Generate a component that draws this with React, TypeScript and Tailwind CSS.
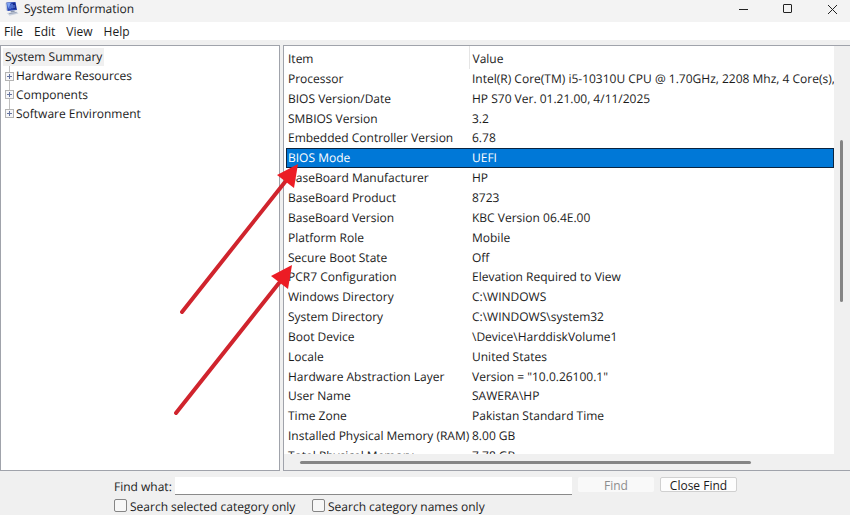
import React from "react";

const rows: [string, string][] = [
  ["Processor", "Intel(R) Core(TM) i5-10310U CPU @ 1.70GHz, 2208 Mhz, 4 Core(s),"],
  ["BIOS Version/Date", "HP S70 Ver. 01.21.00, 4/11/2025"],
  ["SMBIOS Version", "3.2"],
  ["Embedded Controller Version", "6.78"],
  ["BIOS Mode", "UEFI"],
  ["BaseBoard Manufacturer", "HP"],
  ["BaseBoard Product", "8723"],
  ["BaseBoard Version", "KBC Version 06.4E.00"],
  ["Platform Role", "Mobile"],
  ["Secure Boot State", "Off"],
  ["PCR7 Configuration", "Elevation Required to View"],
  ["Windows Directory", "C:\\WINDOWS"],
  ["System Directory", "C:\\WINDOWS\\system32"],
  ["Boot Device", "\\Device\\HarddiskVolume1"],
  ["Locale", "United States"],
  ["Hardware Abstraction Layer", 'Version = "10.0.26100.1"'],
  ["User Name", "SAWERA\\HP"],
  ["Time Zone", "Pakistan Standard Time"],
  ["Installed Physical Memory (RAM)", "8.00 GB"],
  ["Total Physical Memory", "7.78 GB"],
];

const branches = ["Hardware Resources", "Components", "Software Environment"];
const menus = ["File", "Edit", "View", "Help"];

function AppIcon() {
  return (
    <svg width="16" height="16" viewBox="0 0 16 16" aria-hidden="true">
      <path d="M1.500 2 3 1v8l-1 1z" fill="#c3ccdc" />
      <path d="M2.500 1.500 11.500 1l1.500 8-9.500 1z" fill="#2645b4" />
      <path d="M3 2 7 1.700 4 8z" fill="#7fa4f2" />
      <path d="M8.500 2l2.500-.2 1.200 6-2.700.4z" fill="#15298a" />
      <path d="M6 4v4M8 3v4M10 4v3" stroke="#86aaf5" strokeWidth=".8" />
      <path d="M6.500 9.700h4l.5 2h-4z" fill="#8b96ab" />
      <path d="M3 12 12.500 10.500l2 2-9 2.300z" fill="#c9d1df" />
      <path d="M5 12.700 12.500 11.500" stroke="#8590a8" strokeWidth=".7" />
    </svg>
  );
}

function Expander() {
  return (
    <svg width="9" height="9" viewBox="0 0 9 9" aria-hidden="true">
      <rect x=".5" y=".5" width="8" height="8" fill="#f6f6f8" stroke="#b4b4b4" />
      <path d="M2 4.500h5M4.500 2v5" stroke="#6674a0" />
    </svg>
  );
}

function TitleBar() {
  return (
    <header className="flex h-[22px] shrink-0 items-center bg-[#f3f3f3]">
      <div className="flex flex-1 items-center gap-1 pb-1 pl-1">
        <AppIcon />
        <h1 className="text-xs leading-4">System Information</h1>
      </div>
      <div className="flex items-center gap-8 pr-3 pb-1">
        <button aria-label="Minimize" className="h-3 w-3">
          <svg width="12" height="12"><path d="M1 6.500h9" stroke="#222" /></svg>
        </button>
        <button aria-label="Maximize" className="h-3 w-3">
          <svg width="12" height="12"><rect x="1.500" y="1.500" width="8" height="8" rx=".5" fill="none" stroke="#222" /></svg>
        </button>
        <button aria-label="Close" className="h-3 w-3">
          <svg width="12" height="12"><path d="M2 2l9 9M11 2l-9 9" stroke="#222" /></svg>
        </button>
      </div>
    </header>
  );
}

function Tree() {
  return (
    <nav className="w-[280px] shrink-0 border border-[#a0a3ab] bg-white">
      <ul className="relative flex h-[77px] flex-col pt-0.5 text-xs">
        <li className="flex flex-1 items-center pl-0.5">
          <span className="bg-[#f0f0f0] px-0.5 leading-[18px]">System Summary</span>
        </li>
        <li aria-hidden="true" className="absolute top-5 bottom-3 left-2 w-px bg-[#c0c0c0]" />
        {branches.map((b) => (
          <li key={b} className="relative flex flex-1 items-center gap-0.5 pl-1">
            <Expander />
            <span>{b}</span>
          </li>
        ))}
      </ul>
    </nav>
  );
}

function Details() {
  return (
    <section className="flex min-w-0 flex-1 flex-col border-y border-l border-[#a0a3ab] bg-[#f0f0f0]">
      <div className="flex min-h-0 flex-1">
        <div className="min-w-0 flex-1 overflow-hidden bg-white pl-0.5">
          <table className="h-[420px] w-full table-fixed border-collapse text-left text-xs leading-4 whitespace-nowrap">
            <thead>
              <tr className="h-[23px]">
                <th className="w-[183px] border-r border-[#e5e5e5] p-0 pt-0.5 pl-0.5 font-normal">Item</th>
                <th className="p-0 pt-0.5 pl-[3px] font-normal">Value</th>
              </tr>
            </thead>
            <tbody>
              {rows.map(([item, value]) => (
                <tr
                  key={item}
                  className={item === "BIOS Mode" ? "bg-[#0078d7] text-white outline outline-1 -outline-offset-1 outline-[#0a2440]" : ""}
                >
                  <td className="p-0 pl-0.5">{item}</td>
                  <td className="p-0 pl-[3px]">{value}</td>
                </tr>
              ))}
            </tbody>
          </table>
        </div>
        <div className="w-4 pt-[94px]">
          <div className="ml-1.5 h-[162px] w-[3px] rounded-full bg-[#858585]" />
        </div>
      </div>
      <div className="flex h-4 shrink-0 items-center pl-4">
        <div className="h-[3px] w-[82%] rounded-full bg-[#858585]" />
      </div>
    </section>
  );
}

function FindBar() {
  return (
    <form className="flex h-11 shrink-0 flex-col gap-1 overflow-hidden pt-1.5 pl-[114px] text-xs">
      <div className="flex items-start">
        <label htmlFor="find" className="w-[61px] pt-0.5 leading-4">Find what:</label>
        <input id="find" className="h-[18px] min-w-0 flex-1 border-b border-[#8a8a8a] bg-white px-1 outline-none" />
        <button type="button" disabled className="ml-1.5 h-[15px] w-[76px] rounded-xs bg-[#f9f9f9] leading-[17px] text-[#8d8d8d]">Find</button>
        <button type="button" className="mr-[113px] ml-1.5 h-[15px] w-[77px] rounded-xs border border-[#d0d0d0] bg-[#fdfdfd] leading-[15px]">Close Find</button>
      </div>
      <div className="flex leading-4">
        <label className="flex w-[198px] items-start gap-[3px]">
          <input type="checkbox" className="h-[13px] w-[13px] appearance-none rounded-xs border border-[#858585] bg-[#f7f7f7]" />
          Search selected category only
        </label>
        <label className="flex items-start gap-[3px]">
          <input type="checkbox" className="h-[13px] w-[13px] appearance-none rounded-xs border border-[#858585] bg-[#f7f7f7]" />
          Search category names only
        </label>
      </div>
    </form>
  );
}

function Arrows() {
  return (
    <svg className="pointer-events-none absolute top-0 left-0" width="310" height="430" aria-hidden="true">
      <g stroke="#d0242d" strokeWidth="4" strokeLinecap="round">
        <path d="M182 312 285 182" />
        <path d="M176 413 279 283" />
      </g>
      <g fill="#ec1c24">
        <path d="M298 164 277 175 294 188z" />
        <path d="M292 265 271 276 288 289z" />
      </g>
    </svg>
  );
}

export default function App() {
  return (
    <div className="relative flex h-screen flex-col overflow-hidden bg-[#f0f0f0] font-['Open_Sans','Noto_Sans',sans-serif] text-[#1b1b1b] [text-rendering:geometricPrecision]">
      <TitleBar />
      <div className="flex h-[18px] shrink-0 items-center gap-[11px] bg-white pt-0.5 pl-1 text-xs">
        {menus.map((m) => (
          <button key={m} className="leading-4">{m}</button>
        ))}
      </div>
      <main className="flex min-h-0 flex-1 gap-[3px] pt-[5px]">
        <Tree />
        <Details />
      </main>
      <FindBar />
      <Arrows />
    </div>
  );
}
